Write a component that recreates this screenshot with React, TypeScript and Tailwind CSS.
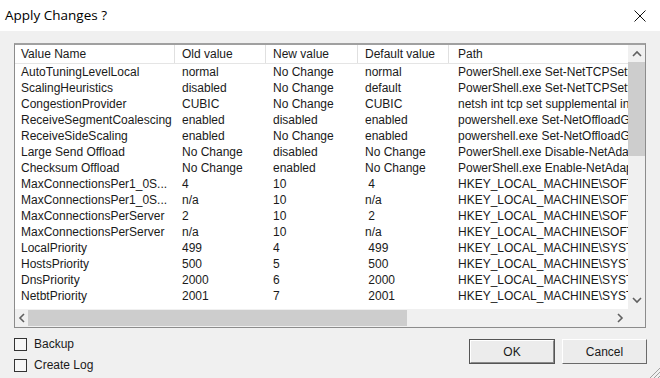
import React from "react";

const rows: [string, string, string, string, string][] = [
  ["AutoTuningLevelLocal", "normal", "No Change", "normal", "PowerShell.exe Set-NetTCPSetting -SettingName InternetCustom"],
  ["ScalingHeuristics", "disabled", "No Change", "default", "PowerShell.exe Set-NetTCPSetting -SettingName InternetCustom"],
  ["CongestionProvider", "CUBIC", "No Change", "CUBIC", "netsh int tcp set supplemental internet congestionprovider"],
  ["ReceiveSegmentCoalescing", "enabled", "disabled", "enabled", "powershell.exe Set-NetOffloadGlobalSetting -ReceiveSegment"],
  ["ReceiveSideScaling", "enabled", "No Change", "enabled", "powershell.exe Set-NetOffloadGlobalSetting -ReceiveSide"],
  ["Large Send Offload", "No Change", "disabled", "No Change", "PowerShell.exe Disable-NetAdapterLso -Name *"],
  ["Checksum Offload", "No Change", "enabled", "No Change", "PowerShell.exe Enable-NetAdapterChecksumOffload -Name *"],
  ["MaxConnectionsPer1_0S...", "4", "10", " 4", "HKEY_LOCAL_MACHINE\\SOFTWARE\\Microsoft\\Internet Explorer"],
  ["MaxConnectionsPer1_0S...", "n/a", "10", "n/a", "HKEY_LOCAL_MACHINE\\SOFTWARE\\Policies\\Microsoft"],
  ["MaxConnectionsPerServer", "2", "10", " 2", "HKEY_LOCAL_MACHINE\\SOFTWARE\\Microsoft\\Internet Explorer"],
  ["MaxConnectionsPerServer", "n/a", "10", "n/a", "HKEY_LOCAL_MACHINE\\SOFTWARE\\Policies\\Microsoft"],
  ["LocalPriority", "499", "4", " 499", "HKEY_LOCAL_MACHINE\\SYSTEM\\CurrentControlSet\\Services"],
  ["HostsPriority", "500", "5", " 500", "HKEY_LOCAL_MACHINE\\SYSTEM\\CurrentControlSet\\Services"],
  ["DnsPriority", "2000", "6", " 2000", "HKEY_LOCAL_MACHINE\\SYSTEM\\CurrentControlSet\\Services"],
  ["NetbtPriority", "2001", "7", " 2001", "HKEY_LOCAL_MACHINE\\SYSTEM\\CurrentControlSet\\Services"],
];

const colW = ["w-[160px] pl-[6px]", "w-[91px] pl-[7px]", "w-[92px] pl-[7px]", "w-[91px] pl-[7px]", "flex-1 pl-[9px]"];
const headers = ["Value Name", "Old value", "New value", "Default value", "Path"];

function Chevron({ dir }: { dir: "up" | "down" | "left" | "right" }) {
  const d =
    dir === "up"
      ? "M1 6 L5 2 L9 6"
      : dir === "down"
      ? "M1 2 L5 6 L9 2"
      : dir === "left"
      ? "M6 1 L2 5 L6 9"
      : "M2 1 L6 5 L2 9";
  const w = dir === "up" || dir === "down" ? 10 : 8;
  const h = dir === "up" || dir === "down" ? 8 : 10;
  return (
    <svg width={w} height={h} viewBox={`0 0 ${w} ${h}`}>
      <path d={d} fill="none" stroke="#606060" strokeWidth="1.6" />
    </svg>
  );
}

export default function App() {
  return (
    <div
      className="relative w-[660px] h-[378px] overflow-hidden bg-[#f0f0f0] text-[#1a1a1a]"
      style={{ fontFamily: '"Liberation Sans", Arial, sans-serif' }}
    >
      {/* title bar */}
      <div className="h-[31px] bg-white flex items-center justify-between pl-[5px] pr-[14px]">
        <span className="text-[13.5px] text-black" style={{ fontFamily: '"Open Sans", "Noto Sans", sans-serif' }}>
          Apply Changes ?
        </span>
        <svg width="12" height="12" viewBox="0 0 12 12">
          <path d="M0.5 0.5 L11.5 11.5 M11.5 0.5 L0.5 11.5" stroke="#111" strokeWidth="1" />
        </svg>
      </div>

      {/* body */}
      <div className="px-[14px] pt-[12px]">
        <div className="h-[285px] border border-[#8c8c8c] border-t-2 border-t-[#a0a0a0] bg-white flex flex-col text-[12px] leading-[16px]">
          <div className="flex h-[264px]">
            <div className="flex-1 flex flex-col overflow-hidden">
              <div className="flex h-[19px] border-b border-[#e5e5e5] bg-white">
                {headers.map((h, i) => (
                  <div
                    key={h}
                    className={`${colW[i]} shrink-0 flex items-center whitespace-nowrap overflow-hidden ${i < 4 ? "border-r border-[#e0e0e0]" : ""}`}
                  >
                    {h}
                  </div>
                ))}
              </div>
              {rows.map((r, ri) => (
                <div key={ri} className="flex h-[16px]">
                  {r.map((c, ci) => (
                    <div key={ci} className={`${colW[ci]} shrink-0 whitespace-pre overflow-hidden`}>
                      {c}
                    </div>
                  ))}
                </div>
              ))}
            </div>
            {/* vertical scrollbar */}
            <div className="w-[17px] bg-[#f0f0f0] flex flex-col">
              <div className="h-[17px] flex items-center justify-center">
                <Chevron dir="up" />
              </div>
              <div className="h-[94px] bg-[#cdcdcd]" />
              <div className="flex-1" />
              <div className="h-[18px] flex items-center justify-center">
                <Chevron dir="down" />
              </div>
            </div>
          </div>
          {/* horizontal scrollbar */}
          <div className="flex h-[18px]">
            <div className="flex-1 bg-[#f0f0f0] flex items-center">
              <div className="w-[13px] h-full flex items-center justify-center">
                <Chevron dir="left" />
              </div>
              <div className="w-[379px] h-[16px] bg-[#cdcdcd]" />
              <div className="flex-1" />
              <div className="w-[17px] h-full flex items-center justify-center">
                <Chevron dir="right" />
              </div>
            </div>
            <div className="w-[17px] bg-[#f0f0f0]" />
          </div>
        </div>

        {/* bottom */}
        <div className="flex justify-between items-start pt-[10px]">
          <div className="flex flex-col gap-[8px] text-[12px] leading-[13px]">
            <label className="flex items-center gap-[7px]">
              <span className="w-[13px] h-[13px] border border-[#333] bg-[#f7f7f7]" />
              <span>Backup</span>
            </label>
            <label className="flex items-center gap-[7px]">
              <span className="w-[13px] h-[13px] border border-[#333] bg-[#f7f7f7]" />
              <span>Create Log</span>
            </label>
          </div>
          <div className="flex gap-[7px] pt-[1px] text-[12px] mr-[-1px]">
            <div className="w-[86px] h-[25px] border border-[#555] flex">
              <div className="flex-1 border border-t-white border-l-white border-b-[#8a8a8a] border-r-[#8a8a8a] bg-[#ececec] flex items-center justify-center">
                OK
              </div>
            </div>
            <div className="w-[85px] h-[25px] border border-t-white border-l-white border-b-[#6a6a6a] border-r-[#6a6a6a] bg-[#ececec] flex items-center justify-center">
              Cancel
            </div>
          </div>
        </div>
      </div>

      {/* resize grip */}
      <svg className="absolute right-0 bottom-0" width="12" height="12" viewBox="0 0 12 12">
        <path d="M12 2 L2 12 M12 6 L6 12 M12 10 L10 12" stroke="#a0a0a0" strokeWidth="1" />
      </svg>
    </div>
  );
}
